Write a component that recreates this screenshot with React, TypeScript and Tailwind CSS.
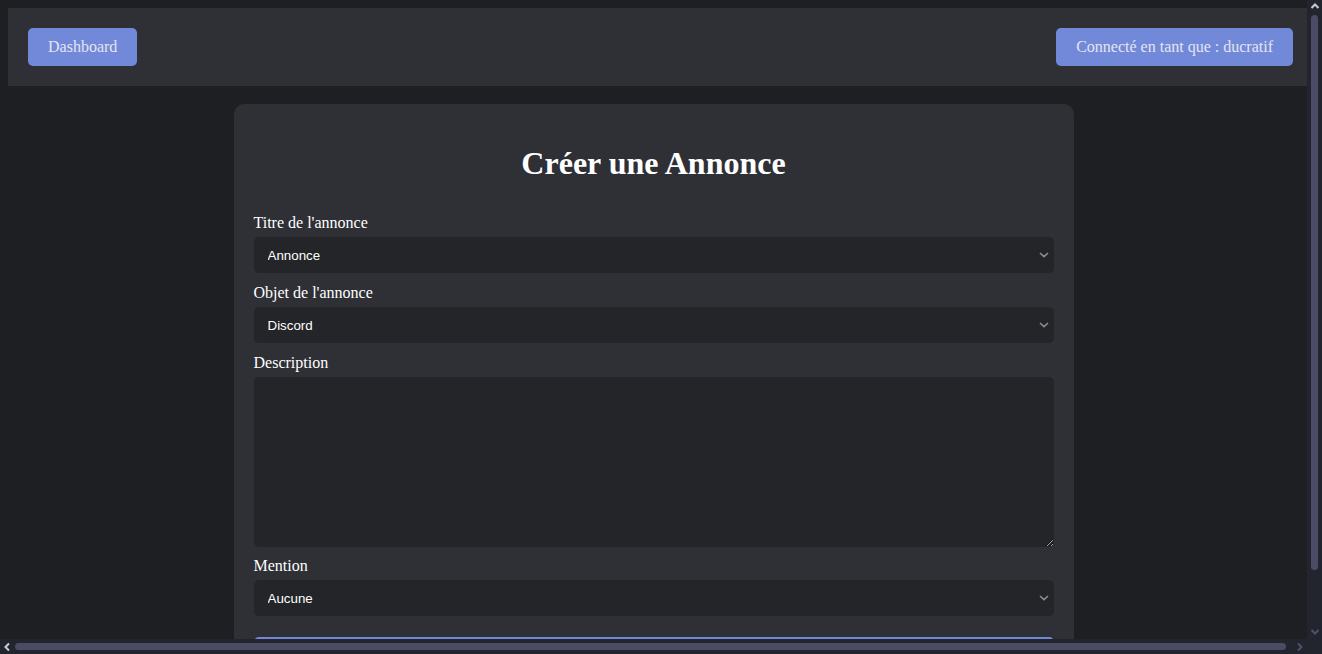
import { useState } from 'react';

const serif = { fontFamily: '"Liberation Serif", "Times New Roman", serif' };

function Chevron() {
  return (
    <svg
      className="pointer-events-none absolute right-[5px] top-1/2 -translate-y-1/2"
      width="10"
      height="6"
      viewBox="0 0 10 6"
      fill="none"
    >
      <path d="M1 1l4 3.6L9 1" stroke="#8b8d91" strokeWidth="1.6" />
    </svg>
  );
}

// little scrollbar arrows, drawn like the browser's dark ones
function Arrow({ dir, light }: { dir: 'up' | 'down' | 'left' | 'right'; light?: boolean }) {
  const d = {
    up: 'M1.5 6L5 2.5 8.5 6',
    down: 'M1.5 3L5 6.5 8.5 3',
    left: 'M6 1.5L2.5 5 6 8.5',
    right: 'M3 1.5L6.5 5 3 8.5',
  }[dir];
  return (
    <svg width="10" height="10" viewBox="0 0 10 10" fill="none">
      <path d={d} stroke={light ? '#c9cbd6' : '#4f5269'} strokeWidth="2" />
    </svg>
  );
}

interface SelectProps {
  id: string;
  label: string;
  value: string;
  options: string[];
  onChange: (v: string) => void;
}

function SelectField({ id, label, value, options, onChange }: SelectProps) {
  return (
    <div className="mb-[10px]">
      <label htmlFor={id} className="mb-[6px] block pt-px text-[16px] leading-[17px] text-white">
        {label}
      </label>
      <div className="relative">
        <select
          id={id}
          value={value}
          onChange={(e) => onChange(e.target.value)}
          className="block h-9 w-full appearance-none rounded-[5px] border-0 bg-[#232528] pl-[14px] pr-6 pt-px text-[13.33px] text-white outline-none"
          style={{ fontFamily: '"Liberation Sans", Arial, sans-serif' }}
        >
          {options.map((o) => (
            <option key={o}>{o}</option>
          ))}
        </select>
        <Chevron />
      </div>
    </div>
  );
}

export default function App() {
  const [titre, setTitre] = useState('Annonce');
  const [objet, setObjet] = useState('Discord');
  const [mention, setMention] = useState('Aucune');
  const [description, setDescription] = useState('');

  return (
    <div className="flex h-screen w-screen flex-col overflow-hidden bg-[#1e1f22] [color-scheme:dark]" style={serif}>
      <div className="flex min-h-0 flex-1">
        {/* page */}
        <div className="min-w-0 flex-1 overflow-hidden">
          <div className="pt-2">
            <header className="ml-2 flex w-full items-center justify-between bg-[#2e3035] p-5">
              <button className="h-[38px] rounded-[5px] bg-[#7289da] px-5 text-[16px] text-[#e3e5f0]">
                Dashboard
              </button>
              <button className="mr-[2px] h-[38px] rounded-[5px] bg-[#7289da] px-5 text-[16px] text-[#e3e5f0]">
                Connecté en tant que : ducratif
              </button>
            </header>

            <main className="mx-auto mb-10 mt-[18px] w-[840px] rounded-[10px] bg-[#2e3035] px-5 pb-5 pt-5">
              <h1 className="mb-[31px] mt-[21px] text-center text-[32px] font-bold leading-[37px] text-white">
                Créer une Annonce
              </h1>

              <form onSubmit={(e) => e.preventDefault()}>
                <SelectField
                  id="titre"
                  label="Titre de l'annonce"
                  value={titre}
                  options={['Annonce', 'Mise à jour', 'Événement']}
                  onChange={setTitre}
                />
                <SelectField
                  id="objet"
                  label="Objet de l'annonce"
                  value={objet}
                  options={['Discord', 'Serveur', 'Site web']}
                  onChange={setObjet}
                />

                <div className="mb-[9px]">
                  <label
                    htmlFor="description"
                    className="mb-[6px] block pt-px text-[16px] leading-[17px] text-white"
                  >
                    Description
                  </label>
                  <textarea
                    id="description"
                    value={description}
                    onChange={(e) => setDescription(e.target.value)}
                    className="block h-[170px] w-full rounded-[5px] border-0 bg-[#232528] p-[10px] text-[13.33px] text-white outline-none"
                  />
                </div>

                <SelectField
                  id="mention"
                  label="Mention"
                  value={mention}
                  options={['Aucune', '@everyone', '@here']}
                  onChange={setMention}
                />

                <button
                  type="submit"
                  className="mt-[11px] h-10 w-full rounded-[5px] bg-[#7289da] text-[16px] text-[#e3e5f0]"
                >
                  Envoyer l'annonce
                </button>
              </form>
            </main>
          </div>
        </div>

        {/* vertical scrollbar */}
        <div className="flex w-[15px] flex-col items-center bg-[#23252e] py-[2px]">
          <Arrow dir="up" light />
          <div className="mt-[3px] h-[555px] w-[7px] rounded-full bg-[#4a4c63]" />
          <div className="flex-1" />
          <Arrow dir="down" />
        </div>
      </div>

      {/* horizontal scrollbar */}
      <div className="flex h-[15px] items-center bg-[#23252e]">
        <div className="flex w-[15px] justify-center">
          <Arrow dir="left" light />
        </div>
        <div className="h-[7px] w-[1271px] rounded-full bg-[#4a4c63]" />
        <div className="flex-1" />
        <div className="flex w-[15px] justify-center">
          <Arrow dir="right" />
        </div>
        <div className="w-[15px]" />
      </div>
    </div>
  );
}
